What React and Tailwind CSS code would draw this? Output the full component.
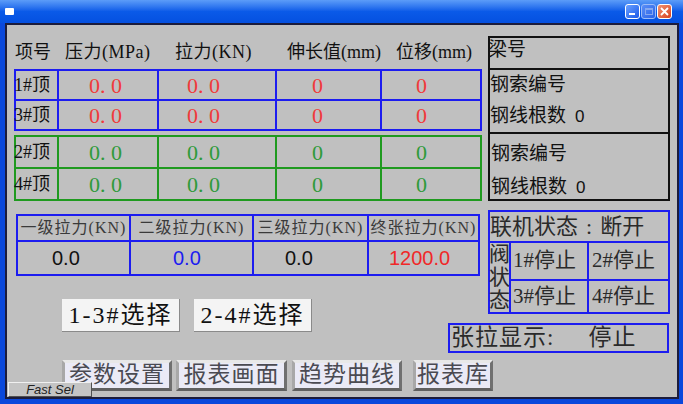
import React from 'react';

const SERIF = "font-['Liberation_Serif','Noto_Sans_CJK_SC',serif]";
const SANS = "font-['Liberation_Sans','Noto_Sans_CJK_SC',sans-serif]";

// jack groups: 1#/3# on the blue frame, 2#/4# on the green frame
const groups = [
  {
    frame: 'bg-[#1c1cf0]',
    rows: 'auto-rows-[28px]',
    tone: 'text-[#f03a3a]',
    labels: ['1#顶', '3#顶'],
  },
  {
    frame: 'bg-[#1f9a1f]',
    rows: 'auto-rows-[30px]',
    tone: 'text-[#2f9a3a]',
    labels: ['2#顶', '4#顶'],
  },
];

const stages = [
  { title: '一级拉力(KN)', value: '0.0', cls: 'pl-[34px] text-[#111]' },
  { title: '二级拉力(KN)', value: '0.0', cls: 'pl-[42px] text-[#1c1cf0]' },
  { title: '三级拉力(KN)', value: '0.0', cls: 'pl-[31px] text-[#111]' },
  { title: '终张拉力(KN)', value: '1200.0', cls: 'pl-[20px] text-[#f02828]' },
];

function TitleBar() {
  return (
    <div className="h-[23px] shrink-0 flex items-center bg-linear-to-b from-[#5c9cf8] via-[#0a5ae8] to-[#0550e0]">
      <div className="ml-[5px] w-[9px] h-[7px] rounded-[1px] bg-white" />
      <div className="ml-auto mr-[11px] flex gap-[1px]">
        <div className="w-[15px] h-[15px] rounded-[3px] border border-white bg-linear-to-br from-[#6aa0ff] to-[#1a56e8] flex items-end pl-[3px] pb-[3px]">
          <div className="w-[6px] h-[2px] bg-white" />
        </div>
        <div className="w-[15px] h-[15px] rounded-[3px] border border-[#9cbcf8] bg-linear-to-br from-[#5a8ef6] to-[#2a62e8] flex items-center justify-center">
          <div className="w-[8px] h-[7px] border border-[#86a8f0] border-t-2" />
        </div>
        <div className="w-[15px] h-[15px] rounded-[3px] border border-white bg-linear-to-br from-[#f09070] to-[#d8401a] flex items-center justify-center">
          <svg width="9" height="9" viewBox="0 0 9 9">
            <path d="M1 1 L8 8 M8 1 L1 8" stroke="white" strokeWidth="1.8" />
          </svg>
        </div>
      </div>
    </div>
  );
}

function JackTable({ frame, rows, tone, labels }) {
  return (
    <div className={`grid grid-cols-[41px_98px_116px_103px_98px] gap-[2px] p-[2px] ${frame} ${rows}`}>
      {labels.map(label => (
        <React.Fragment key={label}>
          <div className="bg-[#c0c0c0] flex items-center text-[18px] text-[#111]">
            <span className="-ml-[2px] whitespace-nowrap">{label}</span>
          </div>
          <div className={`bg-[#c0c0c0] flex items-center pl-[30px] text-[22px] ${tone}`}>0. 0</div>
          <div className={`bg-[#c0c0c0] flex items-center pl-[28px] text-[22px] ${tone}`}>0. 0</div>
          <div className={`bg-[#c0c0c0] flex items-center pl-[35px] text-[22px] ${tone}`}>0</div>
          <div className={`bg-[#c0c0c0] flex items-center pl-[34px] text-[22px] ${tone}`}>0</div>
        </React.Fragment>
      ))}
    </div>
  );
}

function CableBox() {
  return (
    <div className="ml-[6px] w-[182px] grid grid-rows-[30px_62px_65px] gap-[2px] p-[2px] bg-[#111]">
      <div className="bg-[#c0c0c0] flex items-center pb-[5px] text-[19px] text-[#111]">
        <span className="-ml-[2px]">梁号</span>
      </div>
      <div className="bg-[#c0c0c0] flex flex-col text-[19px] text-[#111]">
        <div className="h-[31px] flex items-center">钢索编号</div>
        <div className="h-[31px] flex items-center">
          钢线根数<span className={`ml-[9px] text-[17px] ${SANS}`}>0</span>
        </div>
      </div>
      <div className="bg-[#c0c0c0] flex flex-col pt-[4px] pl-[1px] text-[19px] text-[#111]">
        <div className="h-[33px] shrink-0 flex items-center">钢索编号</div>
        <div className="h-[33px] shrink-0 flex items-center">
          钢线根数<span className={`ml-[9px] text-[17px] ${SANS}`}>0</span>
        </div>
      </div>
    </div>
  );
}

function StageTable() {
  return (
    <div className="mt-[4px] w-[464px] grid grid-cols-[111px_121px_113px_109px] grid-rows-[24px_32px] gap-[2px] p-[2px] bg-[#1c1cf0]">
      {stages.map(s => (
        <div key={s.title} className="bg-[#c0c0c0] flex items-center justify-center whitespace-nowrap text-[16px] tracking-[1px] text-[#3a3a3a]">
          {s.title}
        </div>
      ))}
      {stages.map(s => (
        <div key={s.title + 'v'} className={`bg-[#c0c0c0] flex items-center text-[20px] ${SANS} ${s.cls}`}>
          {s.value}
        </div>
      ))}
    </div>
  );
}

function ValvePanel() {
  const cell = 'bg-[#c0c0c0] flex items-center text-[21px] text-[#2a2a2a] whitespace-nowrap';
  return (
    <div className="w-[182px] grid grid-cols-[19px_76px_79px] grid-rows-[29px_36px_31px] gap-[2px] p-[2px] bg-[#1c1cf0]">
      <div className="col-span-3 bg-[#c0c0c0] flex items-center text-[22px] text-[#2a2a2a] whitespace-nowrap">
        <span>联机状态</span>
        <span className="mx-[8px]">:</span>
        <span>断开</span>
      </div>
      <div className="row-span-2 bg-[#c0c0c0] flex flex-col items-center justify-center text-[21px] leading-[23px] text-[#2a2a2a]">
        <span>阀</span>
        <span>状</span>
        <span>态</span>
      </div>
      <div className={`${cell} pl-[2px]`}>1#停止</div>
      <div className={`${cell} pl-[3px]`}>2#停止</div>
      <div className={`${cell} pl-[2px]`}>3#停止</div>
      <div className={`${cell} pl-[3px]`}>4#停止</div>
    </div>
  );
}

function SelectButton({ label, className = '' }) {
  return (
    <div className={`w-[118px] h-[33px] flex items-center justify-center bg-[#f4f4f4] border-r border-b border-[#8a8a8a] text-[24px] tracking-[2px] text-[#111] whitespace-nowrap ${className}`}>
      {label}
    </div>
  );
}

function MenuButton({ label, className = '' }) {
  return (
    <div className={`h-[31px] flex items-center justify-center border-[3px] border-t-[#e8e8e8] border-l-[#a8a8a8] border-b-[#606060] border-r-[#707070] bg-[#eaeaf6] text-[23px] tracking-[1px] text-[#4a4a52] whitespace-nowrap ${className}`}>
      {label}
    </div>
  );
}

export default function App() {
  return (
    <div className={`w-[683px] h-[404px] flex flex-col bg-[#0a48dc] overflow-hidden ${SERIF}`}>
      <TitleBar />
      <div className="flex-1 flex pl-[5px] pr-[4px] pb-[5px]">
        <div className="relative flex-1 flex flex-col border-2 border-[#1c1c3c] bg-[#c0c0c0]">
          {/* jack readings + cable info */}
          <div className="mt-[11px] flex">
            <div className="ml-[7px] w-[468px] flex flex-col">
              <div className="h-[33px] flex items-center text-[18px] text-[#111] whitespace-nowrap">
                <span className="w-[51px] pl-[1px]">项号</span>
                <span className="w-[110px] tracking-[0.5px]">压力(MPa)</span>
                <span className="w-[112px] tracking-[0.5px]">拉力(KN)</span>
                <span className="w-[109px]">伸长值(mm)</span>
                <span>位移(mm)</span>
              </div>
              <JackTable {...groups[0]} />
              <div className="mt-[4px]">
                <JackTable {...groups[1]} />
              </div>
            </div>
            <CableBox />
          </div>

          {/* stage forces, selection, valve status */}
          <div className="mt-[9px] flex">
            <div className="ml-[9px] flex flex-col">
              <StageTable />
              <div className="mt-[23px] ml-[46px] flex">
                <SelectButton label="1-3#选择" />
                <SelectButton label="2-4#选择" className="ml-[14px]" />
              </div>
            </div>
            <div className="ml-[8px] flex flex-col">
              <ValvePanel />
              <div className="mt-[9px] -ml-[40px] w-[221px] h-[30px] border-2 border-[#1c1cf0] flex items-center pl-[1px] text-[23px] tracking-[1px] text-[#2a2a2a] whitespace-nowrap">
                <span>张拉显示:</span>
                <span className="ml-[34px]">停止</span>
              </div>
            </div>
          </div>

          {/* screen navigation */}
          <div className="mt-[7px] ml-[55px] flex">
            <MenuButton label="参数设置" className="w-[110px]" />
            <MenuButton label="报表画面" className="ml-[4px] w-[111px]" />
            <MenuButton label="趋势曲线" className="ml-[5px] w-[110px]" />
            <MenuButton label="报表库" className="ml-[11px] w-[80px]" />
          </div>

          <div className={`absolute left-[1px] bottom-0 w-[84px] h-[15px] flex items-center justify-center border border-t-[#f0f0f0] border-l-[#f0f0f0] border-b-[#505050] border-r-[#505050] bg-[#c4c4c4] text-[13px] italic text-[#222] ${SANS}`}>
            Fast Sel
          </div>
        </div>
      </div>
    </div>
  );
}
